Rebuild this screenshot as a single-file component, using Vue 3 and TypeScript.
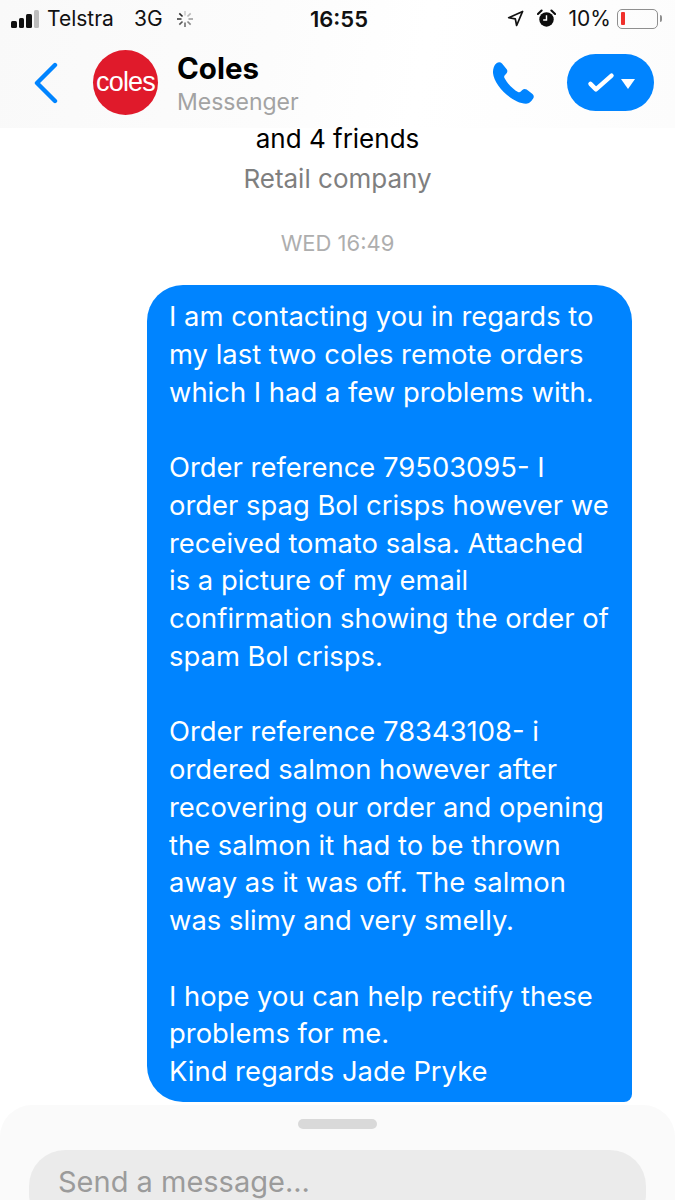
<script setup lang="ts">
const messageLines = [
  'I am contacting you in regards to',
  'my last two coles remote orders',
  'which I had a few problems with.',
  '',
  'Order reference 79503095- I',
  'order spag Bol crisps however we',
  'received tomato salsa. Attached',
  'is a picture of my email',
  'confirmation showing the order of',
  'spam Bol crisps.',
  '',
  'Order reference 78343108- i',
  'ordered salmon however after',
  'recovering our order and opening',
  'the salmon it had to be thrown',
  'away as it was off. The salmon',
  'was slimy and very smelly.',
  '',
  'I hope you can help rectify these',
  'problems for me.',
  'Kind regards Jade Pryke',
]

const spinnerAngles = [0, 45, 90, 135, 180, 225, 270, 315]
</script>

<template>
  <div class="screen">
    <header class="top">
      <div class="status-bar">
        <div class="status-left">
          <span class="signal">
            <i class="bar b1"></i>
            <i class="bar b2"></i>
            <i class="bar b3"></i>
            <i class="bar b4"></i>
          </span>
          <span class="carrier">Telstra</span>
          <span class="network">3G</span>
          <svg class="spinner" viewBox="0 0 20 20" width="20" height="20">
            <line
              v-for="(a, i) in spinnerAngles"
              :key="a"
              x1="10"
              y1="2"
              x2="10"
              y2="6.5"
              stroke="#222"
              stroke-width="1.6"
              :opacity="0.2 + i * 0.11"
              :transform="`rotate(${a} 10 10)`"
            />
          </svg>
        </div>
        <span class="clock">16:55</span>
        <div class="status-right">
          <svg class="location" viewBox="0 0 18 18" width="17" height="17">
            <path d="M16.500 1.500 1.800 8.200l7 1.200 1.400 7z" fill="none" stroke="#111" stroke-width="1.800" stroke-linejoin="round" />
          </svg>
          <svg class="alarm" viewBox="0 0 20 20" width="19" height="19">
            <circle cx="10" cy="11" r="7.600" fill="#0c0c0c" />
            <path d="M10 6.500V11.500H6.500" fill="none" stroke="#fff" stroke-width="1.500" />
            <path d="M1 5.200 4.800 1.600M19 5.200 15.200 1.600" stroke="#0c0c0c" stroke-width="2.200" stroke-linecap="round" />
          </svg>
          <span class="percent">10%</span>
          <span class="battery"><i class="charge"></i></span>
          <i class="battery-tip"></i>
        </div>
      </div>
      <div class="nav-bar">
        <svg class="back" viewBox="0 0 26 42" width="26" height="42">
          <path d="M22 3 4 21l18 18" fill="none" stroke="#0084ff" stroke-width="4.400" stroke-linecap="round" stroke-linejoin="round" />
        </svg>
        <div class="avatar"><span>coles</span></div>
        <div class="title-block">
          <div class="title">Coles</div>
          <div class="subtitle">Messenger</div>
        </div>
        <svg class="phone" viewBox="-1 -1 44 44" width="44" height="44">
          <path
            d="M3.500 1.200C5.500-.3 7.500-.2 9 1.500L13.500 7C14.800 8.600 14.600 10.500 13.200 11.800L11.800 13.200C11 14 11 15 11.500 16C14 21 20 27.500 25 30C26 30.500 27 30.400 27.800 29.600L29.300 28C30.500 26.800 32.300 26.600 33.700 27.600L39.500 32C41 33.200 41.200 35.200 40 36.800C38.500 39 36.500 41.700 33 41.700C20 41.700 1 24 0 11C-.2 7 1 3 3.500 1.200Z"
            fill="#0084ff"
          />
        </svg>
        <div class="manage-pill">
          <svg viewBox="0 0 30 24" width="28" height="22">
            <path d="M3.500 13l6 6L26.500 4" fill="none" stroke="#fff" stroke-width="4.800" stroke-linecap="round" stroke-linejoin="round" />
          </svg>
          <i class="caret"></i>
        </div>
      </div>
    </header>

    <main class="thread">
      <div class="page-info">
        <div class="friends">and 4 friends</div>
        <div class="category">Retail company</div>
      </div>
      <div class="timestamp">WED 16:49</div>
      <div class="bubble">
        <div v-for="(line, i) in messageLines" :key="i" class="line">{{ line }}</div>
      </div>
    </main>

    <footer class="composer">
      <div class="handle"></div>
      <div class="input">Send a message...</div>
    </footer>
  </div>
</template>

<style scoped>
.screen {
  width: 675px;
  height: 1200px;
  overflow: hidden;
  display: flex;
  flex-direction: column;
  background: #fff;
  font-family: Inter, "Liberation Sans", sans-serif;
  color: #000;
}

.top {
  height: 128px;
  flex: none;
  background: linear-gradient(100deg, #f9f9f9 0%, #fcfcfc 40%, #ffffff 62%, #fcfcfc 100%);
}

.status-bar {
  height: 37px;
  display: grid;
  grid-template-columns: 1fr auto 1fr;
  align-items: center;
  padding: 0 13px 0 11px;
  font-size: 21px;
  color: #111;
}

.status-left {
  display: flex;
  align-items: center;
}

.signal {
  display: flex;
  align-items: flex-end;
  gap: 2px;
  height: 19px;
  margin-right: 8px;
}

.bar {
  display: block;
  width: 5.500px;
  border-radius: 1.500px;
  background: #111;
}

.b1 { height: 7px; }
.b2 { height: 10px; }
.b3 { height: 14px; }
.b4 { height: 18px; background: #bdbdbd; }

.network {
  margin-left: 20px;
}

.spinner {
  margin-left: 12px;
}

.clock {
  margin-left: 5px;
  font-size: 22px;
  font-weight: 600;
}

.status-right {
  display: flex;
  align-items: center;
  justify-content: flex-end;
}

.alarm {
  margin-left: 13px;
}

.percent {
  margin-left: 13px;
}

.battery {
  display: flex;
  align-items: center;
  width: 41px;
  height: 20px;
  margin-left: 6px;
  padding: 0 3px;
  box-sizing: border-box;
  border: 1.500px solid #8f8f8f;
  border-radius: 5px;
}

.charge {
  display: block;
  width: 4px;
  height: 13px;
  border-radius: 1px;
  background: #f0302c;
}

.battery-tip {
  display: block;
  width: 2px;
  height: 7px;
  margin-left: 2px;
  border-radius: 0 2px 2px 0;
  background: #8f8f8f;
}

.nav-bar {
  display: flex;
  align-items: center;
  height: 91px;
  padding-left: 33px;
  padding-right: 21px;
}

.back {
  flex: none;
}

.avatar {
  flex: none;
  width: 65px;
  height: 65px;
  margin-left: 34px;
  border-radius: 50%;
  background: #e01a2b;
  display: flex;
  align-items: center;
  justify-content: center;
  color: #fff;
  font-family: "Liberation Sans", Arial, sans-serif;
  font-size: 27px;
  letter-spacing: -0.800px;
}

.title-block {
  flex: 1;
  margin-left: 19px;
  padding-top: 5px;
}

.title {
  font-size: 29.500px;
  line-height: 34px;
  font-weight: 700;
}

.subtitle {
  font-size: 23px;
  line-height: 34px;
  color: #a3a3a3;
}

.phone {
  flex: none;
  margin-right: 31px;
}

.manage-pill {
  flex: none;
  width: 87px;
  height: 57px;
  border-radius: 29px;
  background: #0084ff;
  display: flex;
  align-items: center;
  justify-content: center;
  gap: 6px;
}

.caret {
  display: block;
  width: 0;
  height: 0;
  border-left: 7px solid transparent;
  border-right: 7px solid transparent;
  border-top: 10px solid #fff;
  margin-top: 2px;
}

.thread {
  flex: 1;
  min-height: 0;
  display: flex;
  flex-direction: column;
}

.page-info {
  text-align: center;
}

.friends {
  font-size: 26px;
  line-height: 22px;
}

.category {
  margin-top: 18px;
  font-size: 26px;
  line-height: 22px;
  color: #7f7f7f;
}

.timestamp {
  margin-top: 41px;
  text-align: center;
  font-size: 22px;
  line-height: 24px;
  color: #aeaeae;
}

.bubble {
  align-self: flex-end;
  box-sizing: border-box;
  width: 485px;
  margin: 30px 43px 0 0;
  padding: 13px 12px 11px 22px;
  border-radius: 36px 36px 8px 36px;
  background: #0084ff;
  color: #fff;
  font-size: 27.400px;
}

.line {
  height: 37.750px;
  line-height: 37.750px;
  white-space: nowrap;
}

.composer {
  flex: none;
  height: 95px;
  background: #fafafa;
  border-radius: 32px 32px 0 0;
  padding-top: 14px;
  box-sizing: border-box;
}

.handle {
  width: 79px;
  height: 10px;
  margin: 0 auto;
  border-radius: 5px;
  background: #d9d9d9;
}

.input {
  height: 80px;
  margin: 21px 29px 0;
  padding: 12px 29px 0;
  box-sizing: border-box;
  border-radius: 36px;
  background: #ebebeb;
  color: #9b9b9b;
  font-size: 29px;
  line-height: 40px;
}
</style>
